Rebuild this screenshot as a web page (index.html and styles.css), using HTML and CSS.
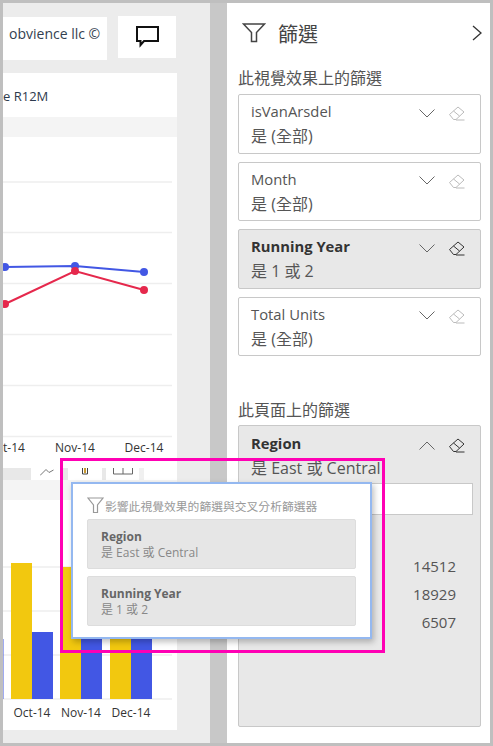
FILE: index.html
```html
<!DOCTYPE html>
<html lang="zh-Hant">
<head>
	<meta charset="UTF-8" />
	<title>篩選</title>
	<link rel="stylesheet" href="styles.css">
</head>
<body>
	<section class="report">
		<div class="report-top">
			<div class="logo-card">obvience llc ©</div>
			<button class="comment-btn" aria-label="comment">
				<svg width="24" height="23" viewBox="0 0 24 23">
					<path d="M2 2H23V16H9L5.5 20V16H2Z" fill="none" stroke="#111" stroke-width="2"/>
				</svg>
			</button>
		</div>

		<div class="visual">
			<div class="visual-title">e R12M</div>
			<div class="visual-strip"></div>
			<svg class="plot" width="174" height="331" viewBox="0 0 174 331">
				<g class="grid">
					<path d="M0 45H169M0 95.500H169M0 146.500H169M0 197.500H169M0 248.500H169M0 299.500H169"/>
				</g>
				<polyline class="line-blue" points="2,130 72,129 141,135"/>
				<polyline class="line-red" points="2,167 72,134 141,153"/>
				<g class="dot-blue">
					<circle cx="2" cy="130" r="4"/><circle cx="72" cy="129" r="4"/><circle cx="141" cy="135" r="4"/>
				</g>
				<g class="dot-red">
					<circle cx="2" cy="167" r="4"/><circle cx="72" cy="134" r="4"/><circle cx="141" cy="153" r="4"/>
				</g>
				<text x="0" y="315">t-14</text>
				<text x="72" y="315" text-anchor="middle">Nov-14</text>
				<text x="141" y="315" text-anchor="middle">Dec-14</text>
			</svg>
		</div>

		<div class="tabs">
			<div class="tab tab-1">
				<svg width="14" height="8" viewBox="0 0 14 8"><path d="M0 7.500L6 1.500L9 4.500L13.500 2" fill="none" stroke="#777"/></svg>
			</div>
			<div class="tab tab-2">
				<svg width="6" height="7" viewBox="0 0 6 7"><path d="M0.500 0V6H5.500V0" fill="none" stroke="#444"/><path d="M2 0V5H4V0" fill="#c99a30"/></svg>
			</div>
			<div class="tab tab-3">
				<svg width="20" height="7" viewBox="0 0 20 7"><path d="M0.500 0V6H19.500V0M10 0V6" fill="none" stroke="#666"/></svg>
			</div>
			<div class="tab-rest"></div>
		</div>

		<div class="visual visual-bars">
			<div class="visual-strip"></div>
			<svg class="plot" width="174" height="230" viewBox="0 0 174 230">
				<g class="grid">
					<path d="M0 67H169M0 111H169M0 155H169M0 199H169"/>
				</g>
				<rect class="bar-sliver" x="0" y="139" width="1" height="60"/>
				<rect class="bar-yellow" x="8" y="63" width="21" height="136"/>
				<rect class="bar-blue" x="29" y="132" width="21" height="67"/>
				<rect class="bar-yellow" x="57" y="67" width="21" height="132"/>
				<rect class="bar-blue" x="78" y="100" width="21" height="99"/>
				<rect class="bar-yellow" x="107" y="100" width="21" height="99"/>
				<rect class="bar-blue" x="128" y="100" width="21" height="99"/>
				<text x="29" y="217" text-anchor="middle">Oct-14</text>
				<text x="78" y="217" text-anchor="middle">Nov-14</text>
				<text x="128" y="217" text-anchor="middle">Dec-14</text>
			</svg>
		</div>
	</section>

	<div class="gutter"></div>

	<aside class="pane">
		<header class="pane-head">
			<svg class="funnel" width="24" height="22" viewBox="0 0 24 22">
				<path d="M1.500 2H22.500L14.500 10.500V19.500H9.500V10.500Z" fill="none" stroke="#444" stroke-width="1.500"/>
			</svg>
			<h1>篩選</h1>
			<svg class="collapse" width="10" height="16" viewBox="0 0 10 16">
				<path d="M1 1L9 8L1 15" fill="none" stroke="#333" stroke-width="1.300"/>
			</svg>
		</header>

		<h2>此視覺效果上的篩選</h2>
		<div class="filter-list">
			<div class="filter">
				<div class="filter-row">
					<span class="filter-name">isVanArsdel</span>
					<svg class="chevron" width="16" height="9" viewBox="0 0 16 9"><path d="M0.500 0.500L8 8L15.500 0.500"/></svg>
					<svg class="eraser" width="16" height="15" viewBox="0 0 16 15"><path d="M0.500 8.500L9 1L15 6L7 13.500H4.500ZM4.500 5L10.500 10M7 14H15.500"/></svg>
				</div>
				<div class="filter-value">是 (全部)</div>
			</div>
			<div class="filter">
				<div class="filter-row">
					<span class="filter-name">Month</span>
					<svg class="chevron" width="16" height="9" viewBox="0 0 16 9"><path d="M0.500 0.500L8 8L15.500 0.500"/></svg>
					<svg class="eraser" width="16" height="15" viewBox="0 0 16 15"><path d="M0.500 8.500L9 1L15 6L7 13.500H4.500ZM4.500 5L10.500 10M7 14H15.500"/></svg>
				</div>
				<div class="filter-value">是 (全部)</div>
			</div>
			<div class="filter is-set">
				<div class="filter-row">
					<span class="filter-name">Running Year</span>
					<svg class="chevron" width="16" height="9" viewBox="0 0 16 9"><path d="M0.500 0.500L8 8L15.500 0.500"/></svg>
					<svg class="eraser" width="16" height="15" viewBox="0 0 16 15"><path d="M0.500 8.500L9 1L15 6L7 13.500H4.500ZM4.500 5L10.500 10M7 14H15.500"/></svg>
				</div>
				<div class="filter-value">是 1 或 2</div>
			</div>
			<div class="filter">
				<div class="filter-row">
					<span class="filter-name">Total Units</span>
					<svg class="chevron" width="16" height="9" viewBox="0 0 16 9"><path d="M0.500 0.500L8 8L15.500 0.500"/></svg>
					<svg class="eraser" width="16" height="15" viewBox="0 0 16 15"><path d="M0.500 8.500L9 1L15 6L7 13.500H4.500ZM4.500 5L10.500 10M7 14H15.500"/></svg>
				</div>
				<div class="filter-value">是 (全部)</div>
			</div>
		</div>

		<h2 class="page-label">此頁面上的篩選</h2>
		<div class="filter is-set region">
			<div class="filter-row">
				<span class="filter-name">Region</span>
				<svg class="chevron" width="16" height="9" viewBox="0 0 16 9"><path d="M0.500 8.500L8 1L15.500 8.500"/></svg>
				<svg class="eraser" width="16" height="15" viewBox="0 0 16 15"><path d="M0.500 8.500L9 1L15 6L7 13.500H4.500ZM4.500 5L10.500 10M7 14H15.500"/></svg>
			</div>
			<div class="filter-value">是 East 或 Central</div>
			<div class="search"></div>
			<ul class="counts">
				<li>14512</li>
				<li>18929</li>
				<li>6507</li>
			</ul>
		</div>
	</aside>

	<div class="highlight"></div>

	<div class="popup">
		<div class="popup-head">
			<svg width="17" height="17" viewBox="0 0 17 17">
				<path d="M1 1H16L10.500 8V15.500H6.500V8Z" fill="none" stroke="#999" stroke-width="1.200"/>
			</svg>
			<span>影響此視覺效果的篩選與交叉分析篩選器</span>
		</div>
		<div class="popup-card">
			<strong>Region</strong>
			<span>是 East 或 Central</span>
		</div>
		<div class="popup-card">
			<strong>Running Year</strong>
			<span>是 1 或 2</span>
		</div>
	</div>
</body>
</html>
```

FILE: styles.css
```css
:root {
	--ui-font: "Open Sans", "Noto Sans CJK TC", sans-serif;
	--frame: #bfbfbf;
	--canvas: #ececec;
	--grid: #eeeeee;
	--text: #555555;
}

*,
*:after,
*:before {
	box-sizing: border-box;
}

html,
body {
	height: 746px;
}

body {
	margin: 0;
	padding: 3px;
	position: relative;
	display: flex;
	overflow: hidden;
	background: var(--frame);
	font-family: var(--ui-font);
	color: var(--text);
}

/* report canvas */
.report {
	width: 207px;
	flex: none;
	padding-top: 13px;
	background: var(--canvas);
}

.report-top {
	display: flex;
	align-items: flex-start;
	margin-bottom: 13px;
}

.logo-card {
	width: 104px;
	height: 43px;
	margin-top: 1px;
	padding: 8px 0 0 6px;
	background: #fff;
	font-size: 14px;
	line-height: 18px;
	white-space: nowrap;
	overflow: hidden;
	color: #333f50;
}

.comment-btn {
	width: 58px;
	height: 42px;
	margin-left: 11px;
	padding: 2px 0 0;
	border: 0;
	background: #fff;
}

.visual {
	width: 174px;
	background: #fff;
}

.visual-title {
	height: 44px;
	padding-top: 13px;
	font-size: 13px;
	line-height: 20px;
	color: #2d3a4d;
}

.visual-strip {
	height: 20px;
	background: #f4f4f4;
}

.plot {
	display: block;
}

.plot text {
	font-family: var(--ui-font);
	font-size: 12px;
	fill: #333;
}

.grid path {
	fill: none;
	stroke: var(--grid);
	stroke-width: 1.500;
}

.line-blue,
.line-red {
	fill: none;
	stroke-width: 2;
}

.line-blue {
	stroke: #4257e4;
}

.line-red {
	stroke: #e5284c;
}

.dot-blue,
.bar-blue {
	fill: #4257e4;
}

.dot-red {
	fill: #e5284c;
}

.bar-yellow {
	fill: #f2c80f;
}

.bar-sliver {
	fill: #4257e4;
	fill-opacity: 0.5;
}

.tabs {
	display: flex;
	width: 174px;
	height: 12px;
	background: #fff;
}

.tab {
	height: 12px;
	display: flex;
	justify-content: center;
	align-items: flex-start;
	background: #fff;
	border-left: 28px solid #e8e8e8;
}

.tab-1 {
	width: 60px;
	padding-left: 0;
}

.tab-2 {
	width: 39px;
	border-left-width: 5px;
}

.tab-3 {
	width: 37px;
	border-left-width: 4px;
}

.tab-rest {
	width: 5px;
	background: #f0f0f0;
}

/* filter pane */
.gutter {
	width: 17px;
	flex: none;
	background: #c8c8c8;
}

.pane {
	flex: 1;
	padding: 0 9px 0 11px;
	background: #fff;
}

.pane-head {
	display: flex;
	align-items: center;
	height: 60px;
	padding: 0 0 0 4px;
}

.pane-head h1 {
	margin: 0 0 0 12px;
	font-size: 20px;
	font-weight: 400;
	color: #444;
	flex: 1;
}

.collapse {
	margin-right: -1px;
}

.pane h2 {
	margin: 5px 0 6px;
	font-size: 16px;
	line-height: 20px;
	font-weight: 400;
	color: #555;
}

.filter-list {
	display: flex;
	flex-direction: column;
	gap: 8px;
}

.filter {
	height: 59.500px;
	padding: 4px 0 0 12px;
	border: 1px solid #c8c8c8;
	border-radius: 2px;
	font-size: 14.800px;
	line-height: 24px;
}

.filter-row {
	display: flex;
	align-items: center;
	height: 24px;
	padding-right: 15px;
}

.filter-name {
	flex: 1;
}

.filter-value {
	height: 24px;
	margin-top: 1px;
	font-size: 16px;
}

.chevron {
	margin: 4px 14px 0 0;
}

.chevron path {
	fill: none;
	stroke: #666;
}

.eraser {
	margin-top: 5px;
}

.eraser path {
	fill: none;
	stroke: #bbbbbb;
}

.filter.is-set {
	background: #e8e8e8;
}

.is-set .filter-name {
	font-weight: 700;
	color: #333;
}

.is-set .eraser path {
	stroke: #333;
}

.pane .page-label {
	margin: 44px 0 5px;
}

.filter.region {
	height: 302px;
	padding-top: 5px;
}

.search {
	height: 32px;
	margin: 3px 7px 0 0;
	background: #fff;
	border: 1px solid #c8c8c8;
}

.counts {
	list-style: none;
	margin: 37px 24px 0 0;
	padding: 0;
	text-align: right;
	line-height: 28px;
	font-size: 15px;
}

/* overlays */
.highlight {
	position: absolute;
	left: 60px;
	top: 458px;
	width: 325px;
	height: 195px;
	border: 3px solid #ff00b4;
}

.popup {
	position: absolute;
	left: 71px;
	top: 482px;
	width: 301px;
	height: 157px;
	padding: 11px 14px 0;
	background: #fff;
	border: 2px solid #94b8f0;
	box-shadow: 2px 3px 6px rgba(0, 0, 0, 0.25);
}

.popup-head {
	display: flex;
	align-items: center;
	height: 20px;
	gap: 1px;
	font-size: 11.800px;
	color: #999;
}

.popup-card {
	display: flex;
	flex-direction: column;
	justify-content: center;
	height: 50px;
	margin-top: 4px;
	padding: 2px 0 0 13px;
	background: #e6e6e6;
	border: 1px solid #dddddd;
	border-radius: 2px;
	font-size: 12px;
	line-height: 16px;
	color: #888;
}

.popup-card + .popup-card {
	margin-top: 7px;
}

.popup-card strong {
	color: #666;
}
```
